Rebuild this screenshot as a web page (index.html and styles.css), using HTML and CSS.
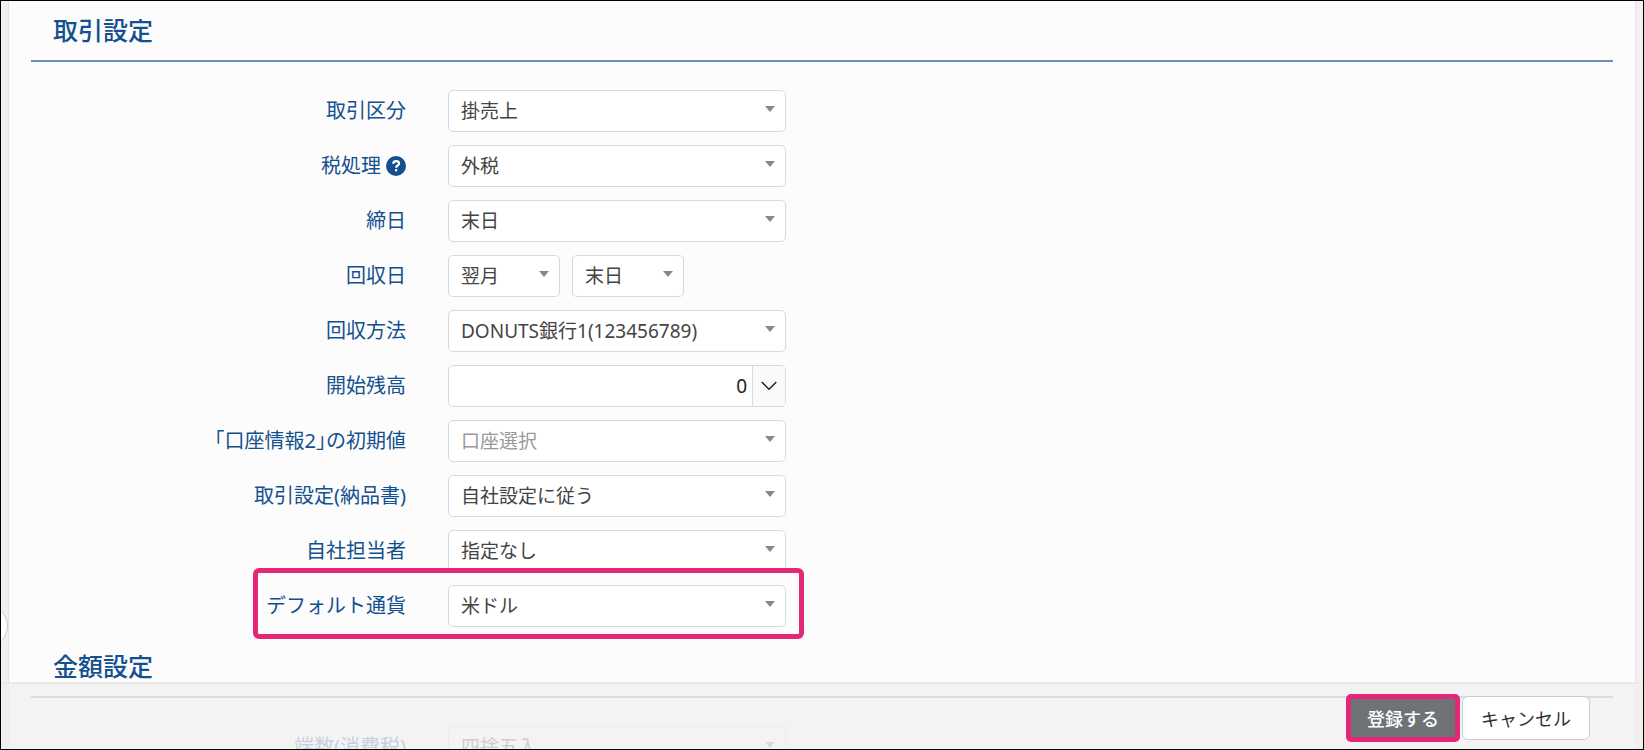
FILE: index.html
```html
<!DOCTYPE html>
<html lang="ja">
<head>
<meta charset="utf-8">
<meta name="viewport" content="width=device-width, initial-scale=1">
<title>取引設定</title>
<link rel="stylesheet" href="styles.css">
</head>
<body>
<div class="app">
  <button class="drawer-toggle" type="button" aria-label="メニュー"></button>
  <main class="panel">
    <section class="section">
      <h2 class="section-title">取引設定</h2>
      <div class="fields">
        <div class="field">
          <label class="field-label" for="category">取引区分</label>
          <div class="select"><select id="category"><option>掛売上</option></select></div>
        </div>
        <div class="field">
          <div class="field-label">
            <label for="tax">税処理</label>
            <svg class="help" viewBox="0 0 20 20" aria-hidden="true">
              <circle cx="10" cy="10" r="10" fill="#14508f"/>
              <path d="M7.1 7.7C7.4 6 8.5 5.2 10.1 5.2c1.800 0 3 .9 3 2.400C13.100 9.600 10.100 9.500 10.100 11.700" fill="none" stroke="#fff" stroke-width="2.200"/>
              <rect x="8.900" y="13" width="2.400" height="2.400" rx="1" fill="#fff"/>
            </svg>
          </div>
          <div class="select"><select id="tax"><option>外税</option></select></div>
        </div>
        <div class="field">
          <label class="field-label" for="closing">締日</label>
          <div class="select"><select id="closing"><option>末日</option></select></div>
        </div>
        <div class="field">
          <label class="field-label" for="collect-month">回収日</label>
          <div class="pair">
            <div class="select"><select id="collect-month"><option>翌月</option></select></div>
            <div class="select"><select aria-label="回収日（日）"><option>末日</option></select></div>
          </div>
        </div>
        <div class="field">
          <label class="field-label" for="method">回収方法</label>
          <div class="select"><select id="method"><option>DONUTS銀行1(123456789)</option></select></div>
        </div>
        <div class="field">
          <label class="field-label" for="balance">開始残高</label>
          <div class="amount">
            <input id="balance" type="text" value="0">
            <button type="button" aria-label="開く">
              <svg viewBox="0 0 16 10" aria-hidden="true"><path d="M0.700 1 8 8.300 15.300 1" fill="none" stroke="#222" stroke-width="1.500"/></svg>
            </button>
          </div>
        </div>
        <div class="field">
          <label class="field-label tight" for="account">「口座情報2」の初期値</label>
          <div class="select placeholder"><select id="account"><option>口座選択</option></select></div>
        </div>
        <div class="field">
          <label class="field-label" for="delivery">取引設定(納品書)</label>
          <div class="select"><select id="delivery"><option>自社設定に従う</option></select></div>
        </div>
        <div class="field">
          <label class="field-label" for="staff">自社担当者</label>
          <div class="select"><select id="staff"><option>指定なし</option></select></div>
        </div>
        <div class="field highlighted">
          <label class="field-label" for="currency">デフォルト通貨</label>
          <div class="select"><select id="currency"><option>米ドル</option></select></div>
        </div>
      </div>
    </section>
    <section class="section">
      <h2 class="section-title">金額設定</h2>
      <div class="fields">
        <div class="field">
          <label class="field-label" for="rounding">端数(消費税)</label>
          <div class="select"><select id="rounding"><option>四捨五入</option></select></div>
        </div>
      </div>
    </section>
  </main>
  <footer class="actions">
    <button class="submit" type="button">登録する</button>
    <button class="cancel" type="button">キャンセル</button>
  </footer>
</div>
</body>
</html>
```
FILE: styles.css
```css
*,
*::before,
*::after {
  box-sizing: border-box;
}

body {
  margin: 0;
  font-family: "Noto Sans", "Noto Sans CJK JP", sans-serif;
  font-size: 20px;
  color: #444;
}

button,
input,
select {
  margin: 0;
  font: inherit;
}

.app {
  position: relative;
  height: 100vh;
  padding: 0 7px;
  overflow: hidden;
  border: 1px solid #000;
  background: #f1f1f2;
}

.drawer-toggle {
  position: absolute;
  top: 604px;
  left: -35px;
  width: 42px;
  height: 42px;
  border: 1px solid #c8c8cc;
  border-radius: 50%;
  background: #fff;
}

.panel {
  padding: 12px 22px 80px;
  border: 1px solid #e0e4e8;
  border-width: 0 1px;
  background: #fcfcfc;
}

.section + .section {
  margin-top: 22px;
}

.section-title {
  margin: 0;
  padding: 0 22px 13px;
  border-bottom: 2px solid #6490bb;
  font-size: 25px;
  font-weight: 500;
  line-height: 34px;
  color: #14508f;
}

.fields {
  display: flex;
  flex-direction: column;
  gap: 13px;
  padding-top: 28px;
}

.field {
  position: relative;
  display: grid;
  grid-template-columns: 375px 338px;
  align-items: center;
  column-gap: 42px;
  height: 42px;
}

.field-label {
  display: flex;
  justify-content: flex-end;
  align-items: center;
  gap: 5px;
  line-height: 28px;
  color: #14508f;
}

.tight {
  font-feature-settings: "halt";
}

.help {
  width: 20px;
  height: 20px;
}

.highlighted::before {
  content: "";
  position: absolute;
  top: -17px;
  left: 222px;
  width: 551px;
  height: 71px;
  border: 5px solid #e42878;
  border-radius: 6px;
  pointer-events: none;
  z-index: 1;
}

.select {
  position: relative;
}

.select select {
  display: block;
  appearance: none;
  width: 100%;
  height: 42px;
  padding: 0 28px 0 12px;
  border: 1px solid #d5dae0;
  border-radius: 5px;
  background: #fff;
  font-size: 19px;
  color: #444;
}

.select::after {
  content: "";
  position: absolute;
  top: 16px;
  right: 11px;
  width: 10px;
  border: 5px solid transparent;
  border-top: 6px solid #888;
  border-bottom: 0;
  pointer-events: none;
}

.placeholder select {
  color: #999;
}

.pair {
  display: grid;
  grid-template-columns: 112px 112px;
  gap: 12px;
}

.amount {
  display: flex;
  align-self: center;
  height: 42px;
  overflow: hidden;
  border: 1px solid #d5dae0;
  border-radius: 5px;
  background: #fff;
}

.amount input {
  flex: 1;
  min-width: 0;
  padding: 0 5px;
  border: 0;
  background: none;
  font-size: 19px;
  text-align: right;
  color: #222;
}

.amount button {
  display: grid;
  place-items: center;
  width: 33px;
  padding: 0;
  border: 0;
  border-left: 1px solid #d5dae0;
  background: #fafafa;
}

.amount svg {
  width: 16px;
  height: 10px;
}

.actions {
  position: absolute;
  right: 0;
  bottom: 0;
  left: 0;
  z-index: 2;
  display: flex;
  justify-content: flex-end;
  align-items: center;
  gap: 2px;
  height: 67px;
  padding: 2px 53px 0;
  border-top: 2px solid #e9e9e9;
  background: rgba(240, 240, 240, 0.8);
  font-size: 18px;
}

.submit {
  height: 48px;
  padding: 0 16px;
  border: 5px solid #e42878;
  border-radius: 5px;
  background: #6f7376;
  font-weight: 500;
  color: #fff;
}

.cancel {
  height: 44px;
  padding: 0 18px;
  border: 1px solid #ccc;
  border-radius: 6px;
  background: #fff;
  color: #333;
}
```
